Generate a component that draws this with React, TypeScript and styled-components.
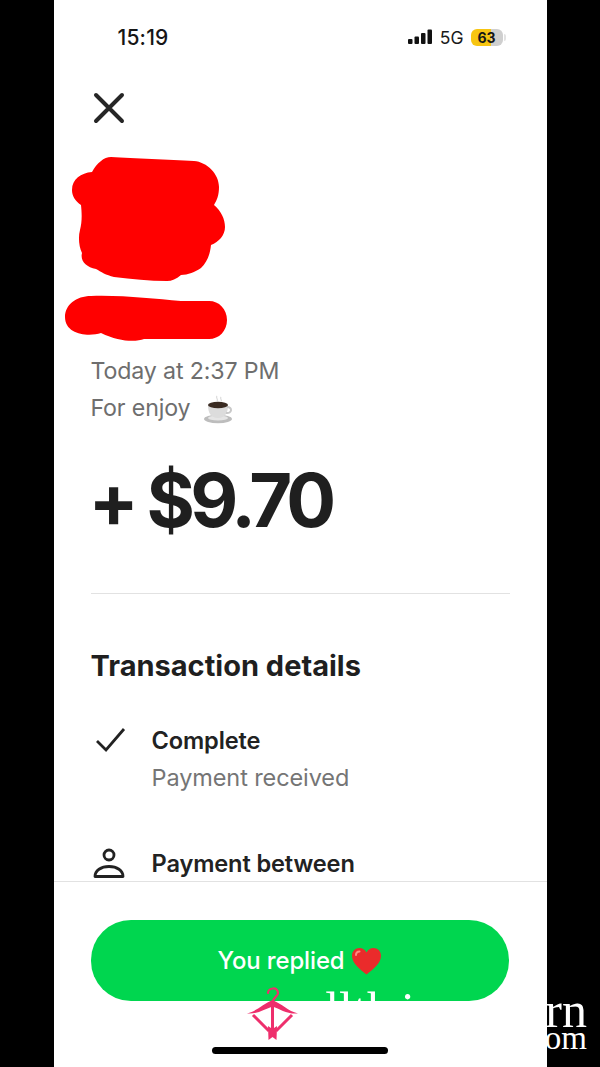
import React from "react";
import styled, { createGlobalStyle } from "styled-components";

const Global = createGlobalStyle`
  html, body { margin: 0; padding: 0; background: #000; }
  body { font-family: Inter, "Liberation Sans", sans-serif; }
`;

const Page = styled.div`
  position: relative;
  width: 600px;
  height: 1067px;
  background: #000;
  overflow: hidden;
  display: flex;
  justify-content: center;
`;

const Phone = styled.main`
  width: 493px;
  height: 1067px;
  background: #fff;
  display: flex;
  flex-direction: column;
  flex-shrink: 0;
`;

const StatusBar = styled.div`
  height: 74px;
  flex-shrink: 0;
  display: flex;
  align-items: center;
  justify-content: space-between;
  padding: 0 44px 0 64px;
  box-sizing: border-box;
`;

const Time = styled.span`
  font-size: 21px;
  font-weight: 500;
  color: #161616;
  letter-spacing: 0.2px;
`;

const StatusRight = styled.div`
  display: flex;
  align-items: center;
  gap: 7px;
`;

const Network = styled.span`
  font-size: 17.5px;
  font-weight: 400;
  color: #1a1a1a;
`;

const Battery = styled.div`
  position: relative;
  width: 32px;
  height: 17px;
  border-radius: 6px;
  background: linear-gradient(90deg, #f7c511 0 63%, #cfcfcf 63% 100%);
  display: flex;
  align-items: center;
  justify-content: center;
  font-size: 14px;
  font-weight: 700;
  color: #161616;
`;

const BatteryCap = styled.i`
  position: absolute;
  right: -3px;
  top: 5px;
  width: 2px;
  height: 7px;
  border-radius: 0 2px 2px 0;
  background: #e2e2e2;
`;

const Scroll = styled.div`
  flex: 1;
  min-height: 0;
  overflow: hidden;
  padding: 0 37px;
  display: flex;
  flex-direction: column;
`;

const CloseButton = styled.div`
  width: 36px;
  height: 36px;
  margin: 16px 0 0 0;
  flex-shrink: 0;
  display: flex;
  color: #262626;
`;

const Redaction = styled.svg`
  display: block;
  width: 170px;
  height: 196px;
  margin: 31px 0 0 -27px;
  flex-shrink: 0;
`;

const Meta = styled.p`
  margin: 0;
  font-size: 23.2px;
  line-height: 37px;
  color: #6e6e6e;
  font-weight: 400;
  display: flex;
  align-items: center;
  gap: 13px;
  height: 37px;
  flex-shrink: 0;
  letter-spacing: -0.15px;
`;

const Amount = styled.h1`
  margin: 27px 0 0 -2px;
  font-size: 74px;
  line-height: 92px;
  font-weight: 700;
  color: #1f1f1f;
  letter-spacing: -4.85px;
  white-space: pre;
  flex-shrink: 0;
`;

const Divider = styled.hr`
  margin: 47px 0 0;
  border: 0;
  border-top: 1px solid #e2e2e2;
  flex-shrink: 0;
`;

const SectionTitle = styled.h2`
  margin: 52px 0 0;
  font-size: 29px;
  line-height: 40px;
  font-weight: 700;
  color: #1f1f1f;
  flex-shrink: 0;
`;

const DetailRow = styled.div<{ $top: number }>`
  display: grid;
  grid-template-columns: 61px 1fr;
  margin-top: ${(p) => p.$top}px;
  flex-shrink: 0;
`;

const DetailIcon = styled.div`
  color: #222;
  display: flex;
  height: 36px;
  align-items: center;
`;

const DetailTitle = styled.div`
  font-size: 23.6px;
  line-height: 36px;
  font-weight: 600;
  color: #222;
  letter-spacing: -0.13px;
`;

const DetailSub = styled.div`
  font-size: 23.5px;
  line-height: 38px;
  color: #757575;
  letter-spacing: -0.1px;
`;

const Footer = styled.footer`
  height: 186px;
  flex-shrink: 0;
  box-sizing: border-box;
  border-top: 1px solid #e2e2e2;
  padding: 38px 38px 0 37px;
  display: flex;
  flex-direction: column;
  align-items: center;
`;

const ReplyButton = styled.div`
  width: 100%;
  height: 81px;
  border-radius: 40px;
  background: #00d64f;
  color: #fff;
  display: flex;
  align-items: center;
  justify-content: center;
  gap: 6px;
  font-size: 23.9px;
  font-weight: 500;
  letter-spacing: -0.1px;
`;

const HomeBar = styled.div`
  width: 176px;
  height: 7px;
  border-radius: 4px;
  background: #000;
  margin-top: 46px;
`;

const Watermark = styled.div`
  position: absolute;
  right: 13px;
  top: 991px;
  color: #fff;
  font-family: "Liberation Serif", serif;
  text-align: right;
  pointer-events: none;
`;

const WatermarkName = styled.div`
  font-size: 50px;
  line-height: 38px;
  white-space: nowrap;
`;

const WatermarkGap = styled.span`
  letter-spacing: 9px;
`;

const WatermarkTld = styled.div`
  font-size: 33px;
  line-height: 18px;
`;

const WatermarkLogo = styled.svg`
  position: absolute;
  left: 245px;
  top: 985px;
  width: 56px;
  height: 56px;
`;

const Cup = () => (
  <svg width="32" height="30" viewBox="0 0 32 30">
    <path d="M14 2c-2 2 2 3 0 5M18 3c-1.500 2 1.500 3 0 4" stroke="#ddd" strokeWidth="1.300" fill="none" />
    <ellipse cx="15" cy="25" rx="14" ry="4.200" fill="#bdbdbd" />
    <ellipse cx="15" cy="24" rx="10" ry="2.500" fill="#e5e5e5" />
    <path d="M5 11c0 8 3 13 10 13s10-5 10-13z" fill="#dcdcdc" />
    <path d="M23 19c6 1 7-6 1-6" stroke="#c9c9c9" strokeWidth="2" fill="none" />
    <ellipse cx="15" cy="11" rx="10" ry="3.200" fill="#3a2b22" />
  </svg>
);

const Heart = () => (
  <svg width="31" height="28" viewBox="0 0 31 28">
    <path
      d="M15.500 27.500C9 22 1 16.500 1 8.700 1 4 4.500 1 8.500 1c3 0 5.500 1.500 7 4.500C17 2.500 19.500 1 22.500 1c4 0 7.500 3 7.500 7.700 0 7.800-8 13.300-14.500 18.800z"
      fill="#ea2b2b"
    />
    <path d="M5 8c0-2 1.500-3.500 3.500-3.500" stroke="#ff8a80" strokeWidth="2" fill="none" strokeLinecap="round" />
  </svg>
);

export default function App() {
  return (
    <Page>
      <Global />
      <Phone>
        <StatusBar>
          <Time>15:19</Time>
          <StatusRight>
            <svg width="25" height="16" viewBox="0 0 25 16" fill="#111">
              <rect x="0" y="10" width="4.500" height="5" rx="1" />
              <rect x="6.500" y="7.500" width="4.500" height="7.500" rx="1" />
              <rect x="13" y="4" width="4.500" height="11" rx="1" />
              <rect x="19.500" y="0.500" width="4.500" height="14.500" rx="1" />
            </svg>
            <Network>5G</Network>
            <Battery>
              63
              <BatteryCap />
            </Battery>
          </StatusRight>
        </StatusBar>
        <Scroll>
          <CloseButton>
            <svg width="36" height="36" viewBox="0 0 36 36" fill="none" stroke="currentColor" strokeWidth="4" strokeLinecap="round">
              <path d="M5 5l26 26M31 5L5 31" />
            </svg>
          </CloseButton>
          <Redaction viewBox="0 0 170 196">
            <path
              fill="#f00"
              d="M47 0C70 1 105 3 130 4C143 5 155 17 155 30C155 38 153 43 150 48C157 54 161 62 161 70C161 78 155 85 147 88C146 98 143 105 137 111C131 115 124 118 117 118C112 122 108 124 103 124C85 124 68 122 50 120C42 118 37 115 32 112C22 110 16 104 18 96C15 90 14 80 16 73C18 65 18 58 17 48C11 44 8 39 8 33C8 22 17 16 28 15C33 6 40 0 47 0Z"
            />
            <path
              fill="#f00"
              d="M27 139C60 138 90 142 117 144L145 144C155 144 163 152 163 163C163 174 155 182 145 182L80 182C72 185 55 185 37 176C25 180 1 178 1 160C1 148 12 139 27 139Z"
            />
          </Redaction>
          <Meta>Today at 2:37 PM</Meta>
          <Meta>
            For enjoy <Cup />
          </Meta>
          <Amount>+ $9.70</Amount>
          <Divider />
          <SectionTitle>Transaction details</SectionTitle>
          <DetailRow $top={37}>
            <DetailIcon>
              <svg width="36" height="30" viewBox="0 0 36 30" fill="none" stroke="currentColor" strokeWidth="2.800">
                <path d="M6 15l9 9L33 3" />
              </svg>
            </DetailIcon>
            <div>
              <DetailTitle>Complete</DetailTitle>
              <DetailSub>Payment received</DetailSub>
            </div>
          </DetailRow>
          <DetailRow $top={49}>
            <DetailIcon>
              <svg width="36" height="32" viewBox="0 0 36 32" fill="none" stroke="currentColor" strokeWidth="2.800">
                <circle cx="18" cy="7" r="5" />
                <path d="M4 28.500c0-6 6-10 14-10s14 4 14 10z" strokeLinejoin="round" />
              </svg>
            </DetailIcon>
            <DetailTitle>Payment between</DetailTitle>
          </DetailRow>
        </Scroll>
        <Footer>
          <ReplyButton>
            You replied <Heart />
          </ReplyButton>
          <HomeBar />
        </Footer>
      </Phone>
      <Watermark>
        <WatermarkName>
          allt<WatermarkGap>h</WatermarkGap>ingsworn
        </WatermarkName>
        <WatermarkTld>.com</WatermarkTld>
      </Watermark>
      <WatermarkLogo viewBox="0 0 56 56" fill="none" stroke="#ee2f6c">
        <path d="M23 8C23 3 33 1 33 8C33 12 28 12 28 17" strokeWidth="2.200" strokeLinecap="round" />
        <path
          d="M2 28.500C12 26 18 19 27.500 15C37 19 43 26 53 28.500C42 29.500 35 24 27.500 21.500C20 24 12 29.500 2 28.500Z"
          fill="#ee2f6c"
          strokeWidth="0"
        />
        <path d="M27.500 17v30" strokeWidth="3" />
        <path d="M8 30l16 16M47 30L31 46" strokeWidth="3" />
        <path d="M23 41l4.500 3 4.500-3-0.500 14-4-3-4 3z" fill="#ee2f6c" strokeWidth="0" />
      </WatermarkLogo>
    </Page>
  );
}
